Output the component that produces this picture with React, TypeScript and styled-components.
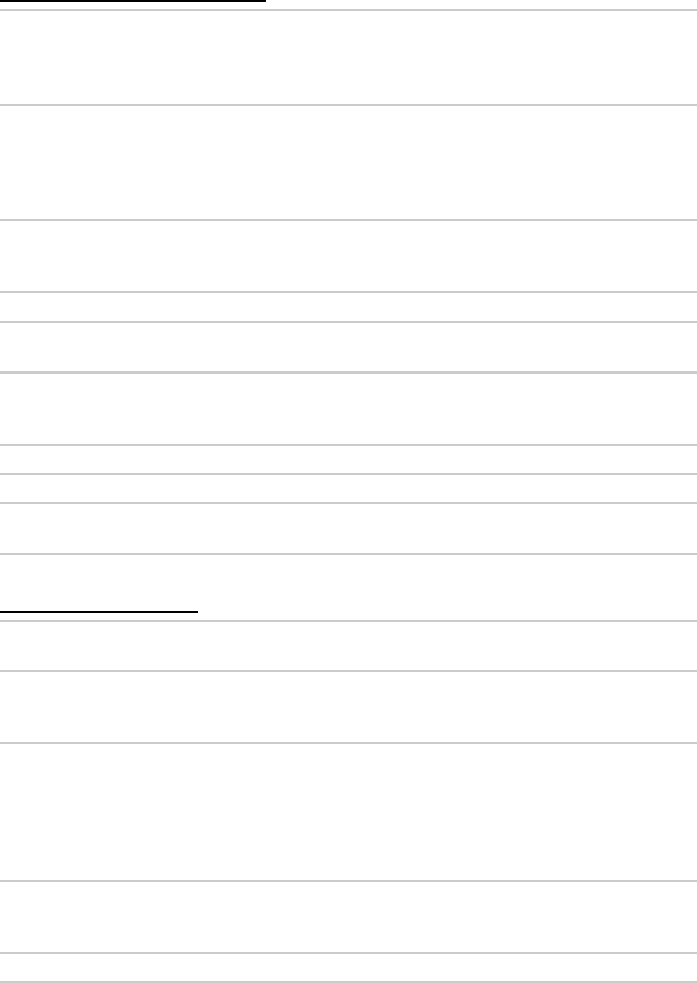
import React from 'react'
import styled, { createGlobalStyle } from 'styled-components'

const GlobalStyle = createGlobalStyle`
  html, body {
    margin: 0;
    padding: 0;
    background: #ffffff;
  }
  body {
    font-family: 'Liberation Sans', Arial, sans-serif;
    color: #ffffff;
  }
`

const Page = styled.main`
  display: flex;
  flex-direction: column;
  width: 697px;
`

const Section = styled.section<{ $gapAfter?: number }>`
  display: flex;
  flex-direction: column;
  margin-bottom: ${(p) => p.$gapAfter ?? 0}px;
`

const Heading = styled.div<{ $width: number }>`
  width: ${(p) => p.$width}px;
  height: 0;
  border-bottom: 2px solid #000000;
  margin-bottom: 7px;
`

const Table = styled.div`
  display: flex;
  flex-direction: column;
  border-top: 2px solid #cbcbcb;
`

const Row = styled.div<{ $height: number; $border?: number }>`
  box-sizing: border-box;
  height: ${(p) => p.$height}px;
  border-bottom: ${(p) => p.$border ?? 2}px solid #cbcbcb;
`

// [height, border]
const first: [number, number][] = [
  [95, 2],
  [115, 2],
  [72, 2],
  [30, 2],
  [51, 3],
  [72, 2],
  [29, 2],
  [29, 2],
  [51, 2],
]
const second: [number, number][] = [
  [50, 2],
  [72, 2],
  [138, 2],
  [72, 2],
  [30, 3],
]

export default function App() {
  return (
    <>
      <GlobalStyle />
      <Page>
        <Section $gapAfter={56}>
          <Heading $width={266} />
          <Table>
            {first.map(([h, b], i) => (
              <Row key={i} $height={h} $border={b} />
            ))}
          </Table>
        </Section>
        <Section>
          <Heading $width={198} />
          <Table>
            {second.map(([h, b], i) => (
              <Row key={i} $height={h} $border={b} />
            ))}
          </Table>
        </Section>
      </Page>
    </>
  )
}
